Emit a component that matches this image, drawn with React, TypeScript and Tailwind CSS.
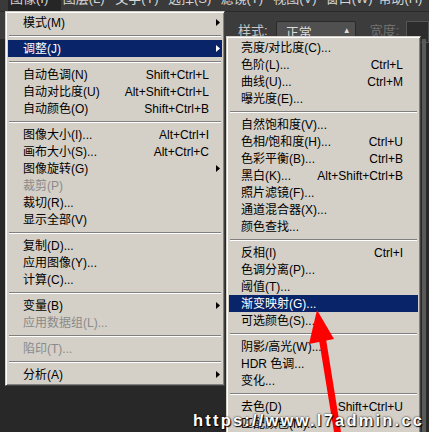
import React from 'react';

type Row =
  | 'sep'
  | { label: string; keys?: string; arrow?: boolean; active?: boolean; disabled?: boolean };

const FONT = { fontFamily: '"Liberation Sans", "Noto Sans CJK SC", sans-serif' };

const imageMenu: Row[] = [
  { label: '模式(M)', arrow: true },
  'sep',
  { label: '调整(J)', arrow: true, active: true },
  'sep',
  { label: '自动色调(N)', keys: 'Shift+Ctrl+L' },
  { label: '自动对比度(U)', keys: 'Alt+Shift+Ctrl+L' },
  { label: '自动颜色(O)', keys: 'Shift+Ctrl+B' },
  'sep',
  { label: '图像大小(I)...', keys: 'Alt+Ctrl+I' },
  { label: '画布大小(S)...', keys: 'Alt+Ctrl+C' },
  { label: '图像旋转(G)', arrow: true },
  { label: '裁剪(P)', disabled: true },
  { label: '裁切(R)...' },
  { label: '显示全部(V)' },
  'sep',
  { label: '复制(D)...' },
  { label: '应用图像(Y)...' },
  { label: '计算(C)...' },
  'sep',
  { label: '变量(B)', arrow: true },
  { label: '应用数据组(L)...', disabled: true },
  'sep',
  { label: '陷印(T)...', disabled: true },
  'sep',
  { label: '分析(A)', arrow: true },
];

const adjustMenu: Row[] = [
  { label: '亮度/对比度(C)...' },
  { label: '色阶(L)...', keys: 'Ctrl+L' },
  { label: '曲线(U)...', keys: 'Ctrl+M' },
  { label: '曝光度(E)...' },
  'sep',
  { label: '自然饱和度(V)...' },
  { label: '色相/饱和度(H)...', keys: 'Ctrl+U' },
  { label: '色彩平衡(B)...', keys: 'Ctrl+B' },
  { label: '黑白(K)...', keys: 'Alt+Shift+Ctrl+B' },
  { label: '照片滤镜(F)...' },
  { label: '通道混合器(X)...' },
  { label: '颜色查找...' },
  'sep',
  { label: '反相(I)', keys: 'Ctrl+I' },
  { label: '色调分离(P)...' },
  { label: '阈值(T)...' },
  { label: '渐变映射(G)...', active: true },
  { label: '可选颜色(S)...' },
  'sep',
  { label: '阴影/高光(W)...' },
  { label: 'HDR 色调...' },
  { label: '变化...' },
  'sep',
  { label: '去色(D)', keys: 'Shift+Ctrl+U' },
  { label: '匹配颜色(M)...' },
];

const topMenu = ['图像(I)', '图层(L)', '文字(Y)', '选择(S)', '滤镜(T)', '视图(V)', '窗口(W)', '帮助(H)'];

function Arrow() {
  return (
    <svg width="4" height="7" viewBox="0 0 4 7">
      <path d="M0 0L4 3.5L0 7Z" fill="currentColor" />
    </svg>
  );
}

function Menu({ rows, className, textPad, tail }: { rows: Row[]; className: string; textPad: string; tail: string }) {
  return (
    <div
      className={`absolute bg-[#d4d0c8] border border-t-[#d4d0c8] border-l-[#d4d0c8] border-r-[#404040] border-b-[#404040] shadow-[inset_1px_1px_0_#fff,inset_-1px_-1px_0_#808080] p-[2px] text-[12px] leading-none ${className}`}
      style={FONT}
    >
      {rows.map((r, i) =>
        r === 'sep' ? (
          <div key={i} className="h-[9px] flex flex-col justify-center px-[1px]">
            <div className="h-[2px] border-t border-t-[#808080] border-b border-b-white" />
          </div>
        ) : (
          <div
            key={i}
            className={`h-[17px] flex items-center ${textPad} ${
              r.active ? 'bg-[#0a246a] text-white' : r.disabled ? 'text-[#8a8a8a]' : 'text-black'
            }`}
          >
            <span className="flex-1 whitespace-nowrap">{r.label}</span>
            {r.keys && <span className="whitespace-nowrap">{r.keys}</span>}
            <span className={`${tail} flex justify-end pr-[2px]`}>{r.arrow && <Arrow />}</span>
          </div>
        )
      )}
    </div>
  );
}

export default function App() {
  return (
    <div className="relative w-[429px] h-[432px] overflow-hidden bg-[#282828]" style={FONT}>
      {/* menu bar, mostly cut off at the top */}
      <div className="h-[11px] bg-[#3a3a3a] overflow-hidden flex pl-[8px]">
        {topMenu.map((m, i) => (
          <div
            key={m}
            className={`w-[55.7px] -mt-[9px] pl-[2px] text-[13px] leading-[16px] text-[#d6d6d6] ${i === 0 ? 'bg-[#262626]' : ''}`}
          >
            {m}
          </div>
        ))}
      </div>

      {/* options bar */}
      <div className="h-[28px] bg-[#3c3c3c] border-t border-[#2a2a2a] flex items-start pt-[9px] text-[13px]">
        <span className="ml-[238px] text-[#c8c8c8]">样式:</span>
        <div className="ml-[8px] w-[80px] h-[22px] rounded-[2px] bg-[#505050] border border-[#2a2a2a] flex items-start pt-[1px] pl-[9px] text-[#dcdcdc]">
          <span className="flex-1">正常</span>
          <span className="pr-[4px] text-[8px] leading-[8px] flex flex-col pt-[4px]">
            <span>▲</span>
            <span>▼</span>
          </span>
        </div>
        <span className="ml-[14px] text-[#707070]">宽度:</span>
        <div className="ml-[7px] flex-1 h-[22px] bg-[#2c2c2c] border border-[#555]" />
      </div>

      {/* workspace */}
      <div className="flex h-[393px]">
        <div className="flex-1" />
        <div className="w-[8px] pl-[1px]">
          <div className="w-[4px] h-full bg-[#5a5a5a]" />
        </div>
      </div>

      <Menu rows={imageMenu} className="left-[5px] top-[11px] w-[220px]" textPad="pl-[15px]" tail="w-[13px]" />
      <Menu rows={adjustMenu} className="left-[226px] top-[36px] w-[195px]" textPad="pl-[12px]" tail="w-[15px]" />

      {/* red arrow */}
      <svg className="absolute left-0 top-0 pointer-events-none" width="429" height="432">
        <polygon points="317,310 309,344 334,339" fill="#ff0000" />
        <polygon points="319,340 326,339 341,432 334,432" fill="#ff0000" />
      </svg>

      {/* watermark */}
      <div
        className="absolute left-[193px] top-[408px] text-[16.5px] font-bold tracking-[2.2px] text-white whitespace-nowrap [text-shadow:0_0_2px_#000,1px_1px_1px_#000]"
        style={{ fontFamily: '"Liberation Sans", Arial, sans-serif' }}
      >
        https://www.l7admin.cc
      </div>
    </div>
  );
}
